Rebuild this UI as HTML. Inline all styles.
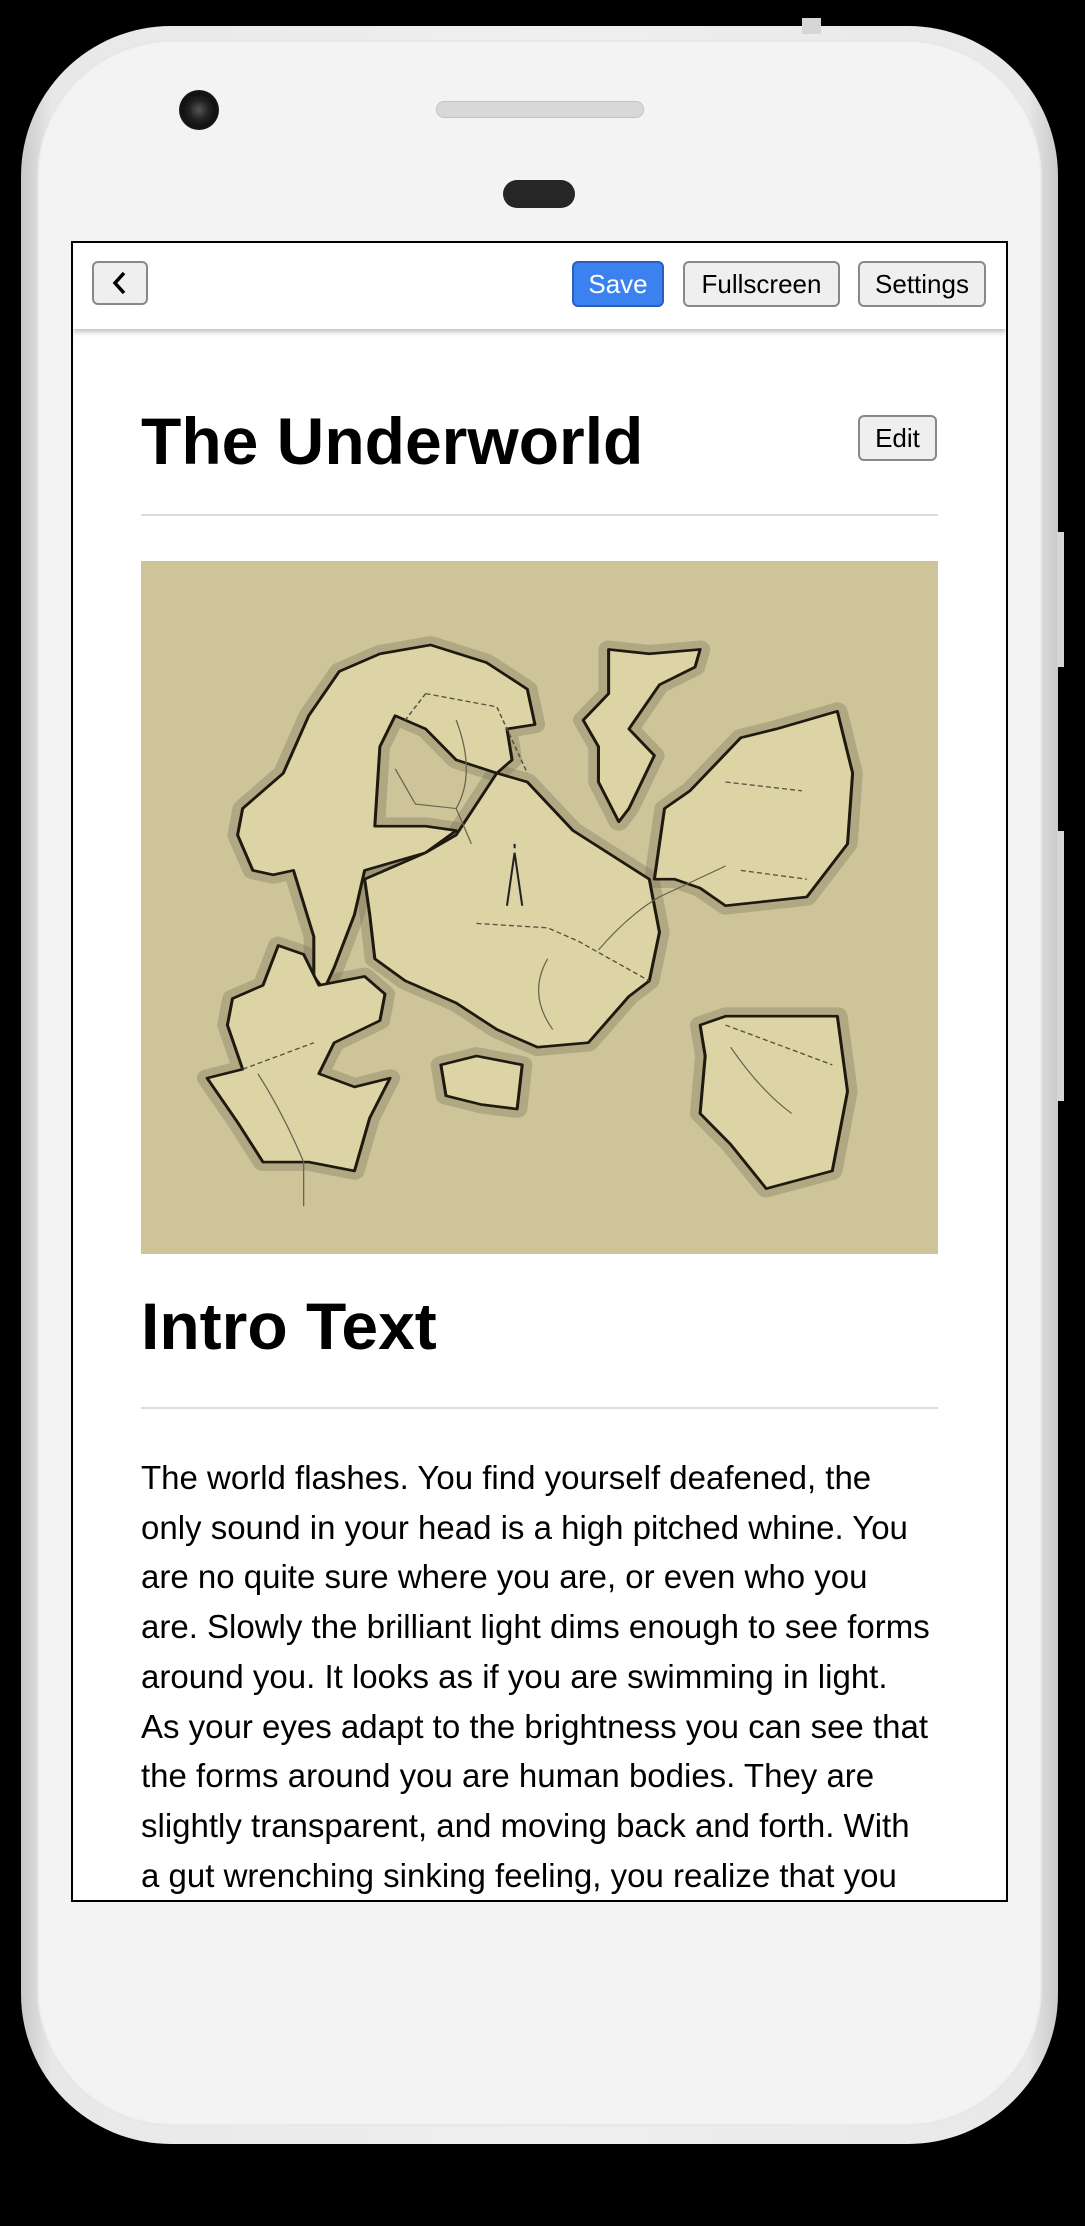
<!DOCTYPE html>
<html><head><meta charset="utf-8">
<style>
html,body{margin:0;padding:0;background:#000;}
body{width:1085px;height:2226px;position:relative;overflow:hidden;font-family:"Liberation Sans",Arial,sans-serif;}
.phone{position:absolute;left:21px;top:26px;width:1037px;height:2118px;border-radius:150px;background:linear-gradient(90deg,#c9c9c9,#e8e8e8 3%,#efefef 50%,#e8e8e8 97%,#c9c9c9);}
.face{position:absolute;left:16px;top:14px;right:16px;bottom:18px;border-radius:136px;background:#f3f3f3;box-shadow:inset 0 0 3px rgba(0,0,0,.15);}
.btnside{position:absolute;background:#d6d6d6;}
.cam{position:absolute;left:179px;top:90px;width:40px;height:40px;border-radius:50%;background:radial-gradient(circle,#555 0,#222 35%,#111 60%,#333 100%);}
.spk{position:absolute;left:436px;top:101px;width:206px;height:15px;border-radius:8px;background:#d8d8d8;border:1px solid #c4c4c4;}
.ear{position:absolute;left:503px;top:180px;width:72px;height:28px;border-radius:14px;background:#262626;}
.screen{position:absolute;left:71px;top:241px;width:933px;height:1657px;border:2px solid #000;background:#fff;overflow:hidden;}
.bar{position:absolute;left:0;top:0;right:0;height:86px;background:#fff;box-shadow:0 3px 5px rgba(0,0,0,.25);z-index:2;}
.b{position:absolute;box-sizing:border-box;border:2px solid #888;border-radius:6px;background:#efefef;font-size:26px;color:#000;text-align:center;}
.h{position:absolute;left:68px;font-weight:bold;font-size:66px;color:#000;margin:0;line-height:1;}
.hr{position:absolute;left:68px;width:797px;height:2px;background:#ddd;}
.p{position:absolute;left:68px;top:1210px;width:840px;font-size:33px;line-height:49.7px;color:#000;white-space:nowrap;}
</style></head><body>
<div class="phone">
  <div class="btnside" style="left:781px;top:-8px;width:19px;height:16px;"></div>
  <div class="btnside" style="right:-6px;top:506px;width:7px;height:135px;"></div>
  <div class="btnside" style="right:-6px;top:805px;width:7px;height:270px;"></div>
  <div class="face"></div>
</div>
<div class="cam"></div><div class="spk"></div><div class="ear"></div>
<div class="screen">
  <div class="bar">
    <div class="b" style="left:19px;top:18px;width:56px;height:44px;">
      <svg width="52" height="40" viewBox="0 0 52 40"><path d="M30 10 L21 20 L30 30" fill="none" stroke="#000" stroke-width="3.5"/></svg>
    </div>
    <div class="b" style="left:499px;top:18px;width:92px;height:46px;line-height:42px;background:#3b82f0;border-color:#2a5fc0;color:#fff;">Save</div>
    <div class="b" style="left:610px;top:18px;width:157px;height:46px;line-height:42px;">Fullscreen</div>
    <div class="b" style="left:785px;top:18px;width:128px;height:46px;line-height:42px;">Settings</div>
  </div>
  <h1 class="h" style="top:165px;">The Underworld</h1>
  <div class="b" style="left:785px;top:172px;width:79px;height:46px;line-height:42px;">Edit</div>
  <div class="hr" style="top:271px;"></div>
  <svg style="position:absolute;left:68px;top:318px;" width="797" height="693" viewBox="0 0 1568 1568" preserveAspectRatio="none">
    <rect width="1568" height="1568" fill="#cdc49a"/>
    <g fill="#ddd4a6" stroke="#7a7258" stroke-width="40" stroke-opacity=".35" stroke-linejoin="round">
      <polygon points="200,560 280,480 330,350 390,250 470,210 570,190 680,230 760,290 775,370 720,380 730,450 700,480 620,450 560,380 500,350 470,420 460,600 560,600 620,610 560,660 440,700 420,800 380,920 360,970 340,940 340,850 300,700 260,710 220,700 190,620"/>
      <polygon points="440,720 560,660 620,620 700,480 760,500 850,610 1000,720 1020,840 1000,950 960,985 880,1090 780,1100 700,1060 620,1000 520,950 460,900 450,800"/>
      <polygon points="870,360 920,300 920,200 1000,210 1100,200 1090,240 1020,280 990,330 960,380 1010,440 960,560 940,590 900,500 900,420"/>
      <polygon points="1010,720 1030,560 1080,520 1180,400 1250,380 1370,340 1400,480 1390,640 1310,760 1230,770 1150,780 1100,740 1050,720"/>
      <polygon points="1100,1050 1150,1030 1370,1030 1390,1200 1360,1380 1230,1420 1160,1320 1100,1250 1110,1120"/>
      <polygon points="130,1170 200,1150 170,1050 180,990 240,960 270,870 320,890 350,960 440,940 480,980 470,1040 380,1090 350,1160 420,1190 490,1170 450,1260 420,1380 330,1360 240,1360 190,1270"/>
      <polygon points="590,1140 660,1120 750,1140 740,1240 670,1230 600,1210"/>
    </g>
    <g fill="#ddd4a6" stroke="#1e1a10" stroke-width="6" stroke-linejoin="round">
      <polygon points="200,560 280,480 330,350 390,250 470,210 570,190 680,230 760,290 775,370 720,380 730,450 700,480 620,450 560,380 500,350 470,420 460,600 560,600 620,610 560,660 440,700 420,800 380,920 360,970 340,940 340,850 300,700 260,710 220,700 190,620"/>
      <polygon points="440,720 560,660 620,620 700,480 760,500 850,610 1000,720 1020,840 1000,950 960,985 880,1090 780,1100 700,1060 620,1000 520,950 460,900 450,800"/>
      <polygon points="870,360 920,300 920,200 1000,210 1100,200 1090,240 1020,280 990,330 960,380 1010,440 960,560 940,590 900,500 900,420"/>
      <polygon points="1010,720 1030,560 1080,520 1180,400 1250,380 1370,340 1400,480 1390,640 1310,760 1230,770 1150,780 1100,740 1050,720"/>
      <polygon points="1100,1050 1150,1030 1370,1030 1390,1200 1360,1380 1230,1420 1160,1320 1100,1250 1110,1120"/>
      <polygon points="130,1170 200,1150 170,1050 180,990 240,960 270,870 320,890 350,960 440,940 480,980 470,1040 380,1090 350,1160 420,1190 490,1170 450,1260 420,1380 330,1360 240,1360 190,1270"/>
      <polygon points="590,1140 660,1120 750,1140 740,1240 670,1230 600,1210"/>
    </g>
    <g fill="none" stroke="#5a5240" stroke-width="3" stroke-dasharray="10 6">
      <path d="M560,300 L700,330 L760,480 M660,820 L800,830 L860,860 L1000,950 M560,300 L520,360 M1150,500 L1300,520 M1180,700 L1310,720 M1150,1050 L1360,1140 M200,1150 L340,1090"/>
    </g>
    <g fill="none" stroke="#6a6250" stroke-width="2.5">
      <path d="M620,360 Q660,480 620,560 L650,640 M500,470 L540,550 L620,560 M900,880 Q960,800 1020,760 L1150,690 M800,900 Q760,980 810,1060 M1160,1100 Q1220,1200 1280,1250 M230,1160 Q280,1250 320,1360 L320,1460"/>
      <path d="M735,660 L720,780 M735,660 L750,780 M735,650 L735,640" stroke="#222" stroke-width="4"/>
    </g>
  </svg>
  <h1 class="h" style="top:1050px;">Intro Text</h1>
  <div class="hr" style="top:1164px;"></div>
  <div class="p">The world flashes. You find yourself deafened, the<br>only sound in your head is a high pitched whine. You<br>are no quite sure where you are, or even who you<br>are. Slowly the brilliant light dims enough to see forms<br>around you. It looks as if you are swimming in light.<br>As your eyes adapt to the brightness you can see that<br>the forms around you are human bodies. They are<br>slightly transparent, and moving back and forth. With<br>a gut wrenching sinking feeling, you realize that you<br>are dead.</div>
</div>
</body></html>
